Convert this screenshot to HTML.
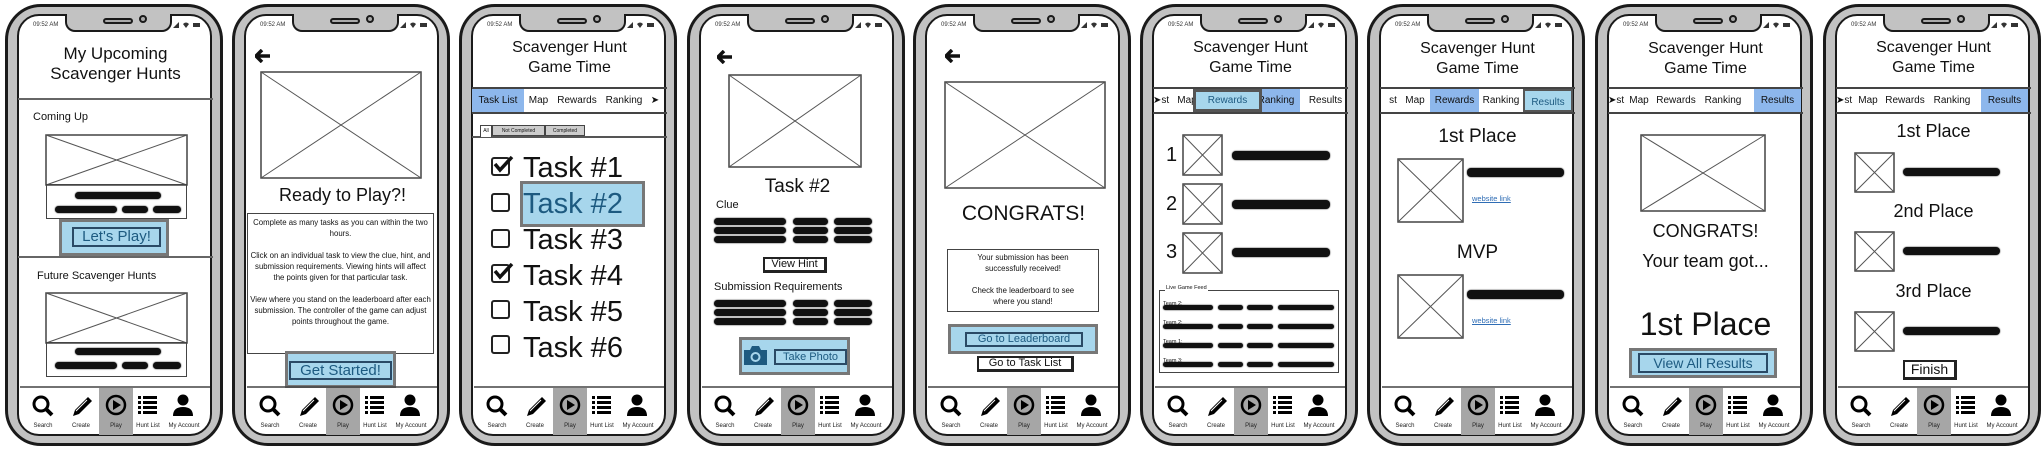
<!DOCTYPE html>
<html><head><meta charset="utf-8"><style>
*{box-sizing:border-box;margin:0;padding:0}
body{width:2044px;height:450px;background:#fff;position:relative;overflow:hidden;font-family:"Liberation Sans",sans-serif;color:#111}
.p{position:absolute;top:0;width:218px;height:450px}
.p>*{position:absolute}
.fo{left:0;top:4px;width:218px;height:442px;border:3px solid #1a1a1a;border-radius:36px;background:#c2c2c2}
.sc{left:12px;top:14px;width:195px;height:422px;border:2px solid #1a1a1a;border-radius:22px;background:#fff}
.no{left:60px;top:14px;width:107px;height:18px;background:#c2c2c2;border:2px solid #1a1a1a;border-top:none;border-radius:0 0 10px 10px}
.sp{left:98px;top:18px;width:30px;height:6px;border:2px solid #1a1a1a;border-radius:4px;background:#aaa}
.ca{left:134px;top:15px;width:8px;height:8px;border:2px solid #1a1a1a;border-radius:50%;background:#aaa}
.st{left:28px;top:22px;font-size:6px;color:#333}
.si{left:168px;top:21px;width:28px;height:8px}
.t{left:13px;width:195px;text-align:center}
.hr{left:13px;width:195px;height:2px;background:#666}
.s{height:7px;background:#111;border-radius:4px;box-shadow:0 0 1.5px #111}
.bx{border:1.5px solid #444}
.bt{background:#a7d6ec;border:3px solid #777}
.ib{border:2px solid #2a4a66;color:#1d5a80;text-align:center;background:#a7d6ec}
.wb{border:2px solid #222;border-right-width:3px;border-bottom-width:3px;text-align:center;background:#fff}
.tb{left:13px;top:87px;width:195px;height:27px;border-top:2px solid #444;border-bottom:2px solid #444;font-size:10px}
.tb span{position:absolute;top:0;height:23px;line-height:23px;text-align:center}
.hb{background:#8db7ec}
.nv{left:0;top:380px;width:218px;height:60px}
.ar{width:16px;height:14px}
svg.x{overflow:visible}
</style></head><body>

<!-- PHONE 1 -->
<div class="p" style="left:5px">
<div class="fo"></div><div class="sc"></div><div class="no"></div><div class="sp"></div><div class="ca"></div><div class="st">09:52 AM</div>
<svg class="si" viewBox="0 0 28 8"><path d="M0 7L6 1V7Z" fill="#333"/><path d="M10 3Q13 0 16 3L13 7Z" fill="#333"/><rect x="20" y="2" width="7" height="4" fill="#333"/></svg>
<div class="t" style="top:44px;font-size:17px;line-height:20px">My Upcoming<br>Scavenger Hunts</div>
<div class="hr" style="top:98px"></div>
<div style="left:28px;top:111px;font-size:11px">Coming Up</div>
<svg class="x" style="left:41px;top:135px;width:141px;height:50px" viewBox="0 0 100 100" preserveAspectRatio="none"><rect width="100" height="100" fill="none" stroke="#444" stroke-width="1.5" vector-effect="non-scaling-stroke"/><path d="M0 0L100 100M100 0L0 100" stroke="#555" vector-effect="non-scaling-stroke"/></svg>
<div class="bx" style="left:41px;top:184px;width:141px;height:35px"></div>
<div class="s" style="left:70px;top:192px;width:86px"></div>
<div class="s" style="left:50px;top:206px;width:62px"></div><div class="s" style="left:117px;top:206px;width:26px"></div><div class="s" style="left:148px;top:206px;width:28px"></div>
<div class="bt" style="left:54px;top:219px;width:110px;height:37px"></div>
<div class="ib" style="left:67px;top:227px;width:89px;height:20px;font-size:15px;line-height:16px">Let's Play!</div>
<div class="hr" style="top:256px"></div>
<div style="left:32px;top:270px;font-size:11px">Future Scavenger Hunts</div>
<svg class="x" style="left:41px;top:293px;width:141px;height:50px" viewBox="0 0 100 100" preserveAspectRatio="none"><rect width="100" height="100" fill="none" stroke="#444" stroke-width="1.5" vector-effect="non-scaling-stroke"/><path d="M0 0L100 100M100 0L0 100" stroke="#555" vector-effect="non-scaling-stroke"/></svg>
<div class="bx" style="left:41px;top:342px;width:141px;height:35px"></div>
<div class="s" style="left:70px;top:348px;width:86px"></div>
<div class="s" style="left:50px;top:362px;width:62px"></div><div class="s" style="left:117px;top:362px;width:26px"></div><div class="s" style="left:148px;top:362px;width:28px"></div>
<svg class="nv" viewBox="0 0 218 60"><line x1="15" y1="7" x2="205" y2="7" stroke="#444" stroke-width="1.5"/><rect x="94" y="8" width="34" height="47" fill="#a6a6a6"/><circle cx="36" cy="24" r="7" stroke="#000" stroke-width="3" fill="none"/><path d="M41 29L47 35" stroke="#000" stroke-width="4"/><path d="M68 36L70 30L83 17L87 21L74 34Z" fill="#000"/><path d="M71 31L82 20" stroke="#fff" stroke-width="1"/><circle cx="111" cy="25" r="9" stroke="#000" stroke-width="2.5" fill="none"/><path d="M108 20L116 25L108 30Z" fill="#000"/><g fill="#000"><rect x="133" y="16" width="3" height="3"/><rect x="138" y="16" width="14" height="3"/><rect x="133" y="21" width="3" height="3"/><rect x="138" y="21" width="14" height="3"/><rect x="133" y="26" width="3" height="3"/><rect x="138" y="26" width="14" height="3"/><rect x="133" y="31" width="3" height="3"/><rect x="138" y="31" width="14" height="3"/></g><circle cx="178" cy="20" r="5.5" fill="#000"/><path d="M168 36Q168 27 178 27Q188 27 188 36Z" fill="#000"/><g font-size="6" text-anchor="middle" fill="#222" font-family="Liberation Sans"><text x="38" y="47">Search</text><text x="76" y="47">Create</text><text x="111" y="47">Play</text><text x="143" y="47">Hunt List</text><text x="179" y="47">My Account</text></g></svg>
</div>

<!-- PHONE 2 -->
<div class="p" style="left:232px">
<div class="fo"></div><div class="sc"></div><div class="no"></div><div class="sp"></div><div class="ca"></div><div class="st">09:52 AM</div>
<svg class="si" viewBox="0 0 28 8"><path d="M0 7L6 1V7Z" fill="#333"/><path d="M10 3Q13 0 16 3L13 7Z" fill="#333"/><rect x="20" y="2" width="7" height="4" fill="#333"/></svg>
<svg class="ar" style="left:23px;top:49px" viewBox="0 0 16 14"><path d="M7 1L1 7L7 13M1 7H15" stroke="#111" stroke-width="3.5" fill="none" stroke-linejoin="round"/></svg>
<svg class="x" style="left:29px;top:72px;width:160px;height:106px" viewBox="0 0 100 100" preserveAspectRatio="none"><rect width="100" height="100" fill="none" stroke="#444" stroke-width="1.5" vector-effect="non-scaling-stroke"/><path d="M0 0L100 100M100 0L0 100" stroke="#555" vector-effect="non-scaling-stroke"/></svg>
<div class="t" style="top:185px;font-size:18px">Ready to Play?!</div>
<div class="bx" style="left:15px;top:213px;width:187px;height:141px;font-size:7.8px;line-height:11px;text-align:center;padding:3px 2px">Complete as many tasks as you can within the two hours.<br><br>Click on an individual task to view the clue, hint, and submission requirements. Viewing hints will affect the points given for that particular task.<br><br>View where you stand on the leaderboard after each submission. The controller of the game can adjust points throughout the game.</div>
<div class="bt" style="left:53px;top:351px;width:111px;height:37px"></div>
<div class="ib" style="left:57px;top:361px;width:103px;height:19px;font-size:15px;line-height:15px">Get Started!</div>
<svg class="nv" viewBox="0 0 218 60"><line x1="15" y1="7" x2="205" y2="7" stroke="#444" stroke-width="1.5"/><rect x="94" y="8" width="34" height="47" fill="#a6a6a6"/><circle cx="36" cy="24" r="7" stroke="#000" stroke-width="3" fill="none"/><path d="M41 29L47 35" stroke="#000" stroke-width="4"/><path d="M68 36L70 30L83 17L87 21L74 34Z" fill="#000"/><path d="M71 31L82 20" stroke="#fff" stroke-width="1"/><circle cx="111" cy="25" r="9" stroke="#000" stroke-width="2.5" fill="none"/><path d="M108 20L116 25L108 30Z" fill="#000"/><g fill="#000"><rect x="133" y="16" width="3" height="3"/><rect x="138" y="16" width="14" height="3"/><rect x="133" y="21" width="3" height="3"/><rect x="138" y="21" width="14" height="3"/><rect x="133" y="26" width="3" height="3"/><rect x="138" y="26" width="14" height="3"/><rect x="133" y="31" width="3" height="3"/><rect x="138" y="31" width="14" height="3"/></g><circle cx="178" cy="20" r="5.5" fill="#000"/><path d="M168 36Q168 27 178 27Q188 27 188 36Z" fill="#000"/><g font-size="6" text-anchor="middle" fill="#222" font-family="Liberation Sans"><text x="38" y="47">Search</text><text x="76" y="47">Create</text><text x="111" y="47">Play</text><text x="143" y="47">Hunt List</text><text x="179" y="47">My Account</text></g></svg>
</div>

<!-- PHONE 3 -->
<div class="p" style="left:459px">
<div class="fo"></div><div class="sc"></div><div class="no"></div><div class="sp"></div><div class="ca"></div><div class="st">09:52 AM</div>
<svg class="si" viewBox="0 0 28 8"><path d="M0 7L6 1V7Z" fill="#333"/><path d="M10 3Q13 0 16 3L13 7Z" fill="#333"/><rect x="20" y="2" width="7" height="4" fill="#333"/></svg>
<div class="t" style="top:38px;font-size:16px;line-height:20px">Scavenger Hunt<br>Game Time</div>
<div class="tb"><span class="hb" style="left:0;width:52px">Task List</span><span style="left:54px;width:25px">Map</span><span style="left:83px;width:44px">Rewards</span><span style="left:130px;width:44px">Ranking</span><span style="left:177px;width:12px">&#10148;</span></div>
<div style="left:13px;top:136px;width:195px;height:2px;background:#555"></div>
<div style="left:21px;top:125px;width:12px;height:12px;border:1px solid #444;border-bottom:none;font-size:5px;line-height:11px;text-align:center;background:#fff">All</div>
<div style="left:33px;top:125px;width:53px;height:11px;border:1px solid #444;font-size:5px;line-height:10px;text-align:center;background:#ccc">Not Completed</div>
<div style="left:86px;top:125px;width:40px;height:11px;border:1px solid #444;font-size:5px;line-height:10px;text-align:center;background:#ccc">Completed</div>
<div class="bt" style="left:61px;top:181px;width:125px;height:46px"></div>
<div style="left:64px;top:150px;font-size:29px;line-height:36px">Task #1<br><span style="position:static;color:#1d5a80">Task #2</span><br>Task #3<br>Task #4<br>Task #5<br>Task #6</div>
<div style="left:32px;top:157px;width:19px;height:19px;border:2px solid #222;border-radius:3px"></div>
<div style="left:32px;top:193px;width:19px;height:19px;border:2px solid #222;border-radius:3px"></div>
<div style="left:32px;top:229px;width:19px;height:19px;border:2px solid #222;border-radius:3px"></div>
<div style="left:32px;top:264px;width:19px;height:19px;border:2px solid #222;border-radius:3px"></div>
<div style="left:32px;top:300px;width:19px;height:19px;border:2px solid #222;border-radius:3px"></div>
<div style="left:32px;top:335px;width:19px;height:19px;border:2px solid #222;border-radius:3px"></div>
<svg style="left:33px;top:154px;width:22px;height:22px" viewBox="0 0 22 22"><path d="M3 10L8 16L20 3" stroke="#111" stroke-width="3.5" fill="none"/></svg>
<svg style="left:33px;top:261px;width:22px;height:22px" viewBox="0 0 22 22"><path d="M3 10L8 16L20 3" stroke="#111" stroke-width="3.5" fill="none"/></svg>
<svg class="nv" viewBox="0 0 218 60"><line x1="15" y1="7" x2="205" y2="7" stroke="#444" stroke-width="1.5"/><rect x="94" y="8" width="34" height="47" fill="#a6a6a6"/><circle cx="36" cy="24" r="7" stroke="#000" stroke-width="3" fill="none"/><path d="M41 29L47 35" stroke="#000" stroke-width="4"/><path d="M68 36L70 30L83 17L87 21L74 34Z" fill="#000"/><path d="M71 31L82 20" stroke="#fff" stroke-width="1"/><circle cx="111" cy="25" r="9" stroke="#000" stroke-width="2.5" fill="none"/><path d="M108 20L116 25L108 30Z" fill="#000"/><g fill="#000"><rect x="133" y="16" width="3" height="3"/><rect x="138" y="16" width="14" height="3"/><rect x="133" y="21" width="3" height="3"/><rect x="138" y="21" width="14" height="3"/><rect x="133" y="26" width="3" height="3"/><rect x="138" y="26" width="14" height="3"/><rect x="133" y="31" width="3" height="3"/><rect x="138" y="31" width="14" height="3"/></g><circle cx="178" cy="20" r="5.5" fill="#000"/><path d="M168 36Q168 27 178 27Q188 27 188 36Z" fill="#000"/><g font-size="6" text-anchor="middle" fill="#222" font-family="Liberation Sans"><text x="38" y="47">Search</text><text x="76" y="47">Create</text><text x="111" y="47">Play</text><text x="143" y="47">Hunt List</text><text x="179" y="47">My Account</text></g></svg>
</div>

<!-- PHONE 4 -->
<div class="p" style="left:687px">
<div class="fo"></div><div class="sc"></div><div class="no"></div><div class="sp"></div><div class="ca"></div><div class="st">09:52 AM</div>
<svg class="si" viewBox="0 0 28 8"><path d="M0 7L6 1V7Z" fill="#333"/><path d="M10 3Q13 0 16 3L13 7Z" fill="#333"/><rect x="20" y="2" width="7" height="4" fill="#333"/></svg>
<svg class="ar" style="left:30px;top:50px" viewBox="0 0 16 14"><path d="M7 1L1 7L7 13M1 7H15" stroke="#111" stroke-width="3.5" fill="none" stroke-linejoin="round"/></svg>
<svg class="x" style="left:42px;top:75px;width:132px;height:92px" viewBox="0 0 100 100" preserveAspectRatio="none"><rect width="100" height="100" fill="none" stroke="#444" stroke-width="1.5" vector-effect="non-scaling-stroke"/><path d="M0 0L100 100M100 0L0 100" stroke="#555" vector-effect="non-scaling-stroke"/></svg>
<div class="t" style="top:176px;font-size:19px">Task #2</div>
<div style="left:29px;top:199px;font-size:11px">Clue</div>
<div class="s" style="left:27px;top:218px;width:72px"></div><div class="s" style="left:106px;top:218px;width:35px"></div><div class="s" style="left:147px;top:218px;width:38px"></div>
<div class="s" style="left:27px;top:227px;width:72px"></div><div class="s" style="left:106px;top:227px;width:35px"></div><div class="s" style="left:147px;top:227px;width:38px"></div>
<div class="s" style="left:27px;top:236px;width:72px"></div><div class="s" style="left:106px;top:236px;width:35px"></div><div class="s" style="left:147px;top:236px;width:38px"></div>
<div class="wb" style="left:76px;top:257px;width:64px;height:16px;font-size:11px;line-height:11px">View Hint</div>
<div style="left:27px;top:281px;font-size:11px">Submission Requirements</div>
<div class="s" style="left:27px;top:300px;width:72px"></div><div class="s" style="left:106px;top:300px;width:35px"></div><div class="s" style="left:147px;top:300px;width:38px"></div>
<div class="s" style="left:27px;top:309px;width:72px"></div><div class="s" style="left:106px;top:309px;width:35px"></div><div class="s" style="left:147px;top:309px;width:38px"></div>
<div class="s" style="left:27px;top:318px;width:72px"></div><div class="s" style="left:106px;top:318px;width:35px"></div><div class="s" style="left:147px;top:318px;width:38px"></div>
<div class="bt" style="left:52px;top:337px;width:111px;height:38px"></div>
<svg style="left:56px;top:344px;width:25px;height:22px" viewBox="0 0 25 22"><path d="M1 6H7L9 2H16L18 6H24V21H1Z" fill="#1d5a80"/><circle cx="12.5" cy="13" r="5" fill="#a7d6ec"/><circle cx="12.5" cy="13" r="3" fill="#1d5a80"/></svg>
<div class="ib" style="left:87px;top:349px;width:73px;height:16px;font-size:11px;line-height:12px">Take Photo</div>
<svg class="nv" viewBox="0 0 218 60"><line x1="15" y1="7" x2="205" y2="7" stroke="#444" stroke-width="1.5"/><rect x="94" y="8" width="34" height="47" fill="#a6a6a6"/><circle cx="36" cy="24" r="7" stroke="#000" stroke-width="3" fill="none"/><path d="M41 29L47 35" stroke="#000" stroke-width="4"/><path d="M68 36L70 30L83 17L87 21L74 34Z" fill="#000"/><path d="M71 31L82 20" stroke="#fff" stroke-width="1"/><circle cx="111" cy="25" r="9" stroke="#000" stroke-width="2.5" fill="none"/><path d="M108 20L116 25L108 30Z" fill="#000"/><g fill="#000"><rect x="133" y="16" width="3" height="3"/><rect x="138" y="16" width="14" height="3"/><rect x="133" y="21" width="3" height="3"/><rect x="138" y="21" width="14" height="3"/><rect x="133" y="26" width="3" height="3"/><rect x="138" y="26" width="14" height="3"/><rect x="133" y="31" width="3" height="3"/><rect x="138" y="31" width="14" height="3"/></g><circle cx="178" cy="20" r="5.5" fill="#000"/><path d="M168 36Q168 27 178 27Q188 27 188 36Z" fill="#000"/><g font-size="6" text-anchor="middle" fill="#222" font-family="Liberation Sans"><text x="38" y="47">Search</text><text x="76" y="47">Create</text><text x="111" y="47">Play</text><text x="143" y="47">Hunt List</text><text x="179" y="47">My Account</text></g></svg>
</div>

<!-- PHONE 5 -->
<div class="p" style="left:913px">
<div class="fo"></div><div class="sc"></div><div class="no"></div><div class="sp"></div><div class="ca"></div><div class="st">09:52 AM</div>
<svg class="si" viewBox="0 0 28 8"><path d="M0 7L6 1V7Z" fill="#333"/><path d="M10 3Q13 0 16 3L13 7Z" fill="#333"/><rect x="20" y="2" width="7" height="4" fill="#333"/></svg>
<svg class="ar" style="left:32px;top:49px" viewBox="0 0 16 14"><path d="M7 1L1 7L7 13M1 7H15" stroke="#111" stroke-width="3.5" fill="none" stroke-linejoin="round"/></svg>
<svg class="x" style="left:32px;top:82px;width:160px;height:106px" viewBox="0 0 100 100" preserveAspectRatio="none"><rect width="100" height="100" fill="none" stroke="#444" stroke-width="1.5" vector-effect="non-scaling-stroke"/><path d="M0 0L100 100M100 0L0 100" stroke="#555" vector-effect="non-scaling-stroke"/></svg>
<div class="t" style="top:202px;font-size:21px">CONGRATS!</div>
<div class="bx" style="left:34px;top:249px;width:152px;height:63px;font-size:7.8px;line-height:11px;text-align:center;padding-top:2px">Your submission has been<br>successfully received!<br><br>Check the leaderboard to see<br>where you stand!</div>
<div class="bt" style="left:35px;top:324px;width:150px;height:30px"></div>
<div class="ib" style="left:52px;top:332px;width:118px;height:15px;font-size:11px;line-height:11px">Go to Leaderboard</div>
<div class="wb" style="left:64px;top:356px;width:97px;height:16px;font-size:11px;line-height:11px">Go to Task List</div>
<svg class="nv" viewBox="0 0 218 60"><line x1="15" y1="7" x2="205" y2="7" stroke="#444" stroke-width="1.5"/><rect x="94" y="8" width="34" height="47" fill="#a6a6a6"/><circle cx="36" cy="24" r="7" stroke="#000" stroke-width="3" fill="none"/><path d="M41 29L47 35" stroke="#000" stroke-width="4"/><path d="M68 36L70 30L83 17L87 21L74 34Z" fill="#000"/><path d="M71 31L82 20" stroke="#fff" stroke-width="1"/><circle cx="111" cy="25" r="9" stroke="#000" stroke-width="2.5" fill="none"/><path d="M108 20L116 25L108 30Z" fill="#000"/><g fill="#000"><rect x="133" y="16" width="3" height="3"/><rect x="138" y="16" width="14" height="3"/><rect x="133" y="21" width="3" height="3"/><rect x="138" y="21" width="14" height="3"/><rect x="133" y="26" width="3" height="3"/><rect x="138" y="26" width="14" height="3"/><rect x="133" y="31" width="3" height="3"/><rect x="138" y="31" width="14" height="3"/></g><circle cx="178" cy="20" r="5.5" fill="#000"/><path d="M168 36Q168 27 178 27Q188 27 188 36Z" fill="#000"/><g font-size="6" text-anchor="middle" fill="#222" font-family="Liberation Sans"><text x="38" y="47">Search</text><text x="76" y="47">Create</text><text x="111" y="47">Play</text><text x="143" y="47">Hunt List</text><text x="179" y="47">My Account</text></g></svg>
</div>

<!-- PHONE 6 -->
<div class="p" style="left:1140px">
<div class="fo"></div><div class="sc"></div><div class="no"></div><div class="sp"></div><div class="ca"></div><div class="st">09:52 AM</div>
<svg class="si" viewBox="0 0 28 8"><path d="M0 7L6 1V7Z" fill="#333"/><path d="M10 3Q13 0 16 3L13 7Z" fill="#333"/><rect x="20" y="2" width="7" height="4" fill="#333"/></svg>
<div class="t" style="top:38px;font-size:16px;line-height:20px">Scavenger Hunt<br>Game Time</div>
<div class="tb"><span style="left:0;width:16px">&#10148;st</span><span style="left:23px;width:22px">Map</span><span class="hb" style="left:99px;width:48px">Ranking</span><span style="left:40px;width:69px;background:#a7d6ec;border:3px solid #555;line-height:17px;color:#1d5a80">Rewards</span><span style="left:150px;width:45px">Results</span></div>
<div style="left:26px;top:144px;font-size:20px">1</div>
<div style="left:26px;top:193px;font-size:20px">2</div>
<div style="left:26px;top:241px;font-size:20px">3</div>
<svg class="x" style="left:43px;top:135px;width:39px;height:40px" viewBox="0 0 100 100" preserveAspectRatio="none"><rect width="100" height="100" fill="none" stroke="#444" stroke-width="1.5" vector-effect="non-scaling-stroke"/><path d="M0 0L100 100M100 0L0 100" stroke="#555" vector-effect="non-scaling-stroke"/></svg>
<svg class="x" style="left:43px;top:184px;width:39px;height:40px" viewBox="0 0 100 100" preserveAspectRatio="none"><rect width="100" height="100" fill="none" stroke="#444" stroke-width="1.5" vector-effect="non-scaling-stroke"/><path d="M0 0L100 100M100 0L0 100" stroke="#555" vector-effect="non-scaling-stroke"/></svg>
<svg class="x" style="left:43px;top:233px;width:39px;height:40px" viewBox="0 0 100 100" preserveAspectRatio="none"><rect width="100" height="100" fill="none" stroke="#444" stroke-width="1.5" vector-effect="non-scaling-stroke"/><path d="M0 0L100 100M100 0L0 100" stroke="#555" vector-effect="non-scaling-stroke"/></svg>
<div class="s" style="left:92px;top:151px;width:98px;height:9px"></div>
<div class="s" style="left:92px;top:200px;width:98px;height:9px"></div>
<div class="s" style="left:92px;top:248px;width:98px;height:9px"></div>
<div class="bx" style="left:19px;top:290px;width:180px;height:83px"></div>
<div style="left:25px;top:285px;font-size:5.5px;background:#fff;padding:0 1px">Live Game Feed</div>
<div style="left:23px;top:295px;font-size:5.5px;line-height:19px">Team 2:<br>Team 2:<br>Team 1:<br>Team 3:</div>
<div class="s" style="left:23px;top:305px;width:50px;height:5px"></div><div class="s" style="left:78px;top:305px;width:25px;height:5px"></div><div class="s" style="left:107px;top:305px;width:26px;height:5px"></div><div class="s" style="left:138px;top:305px;width:56px;height:5px"></div>
<div class="s" style="left:23px;top:324px;width:50px;height:5px"></div><div class="s" style="left:78px;top:324px;width:25px;height:5px"></div><div class="s" style="left:107px;top:324px;width:26px;height:5px"></div><div class="s" style="left:138px;top:324px;width:56px;height:5px"></div>
<div class="s" style="left:23px;top:343px;width:50px;height:5px"></div><div class="s" style="left:78px;top:343px;width:25px;height:5px"></div><div class="s" style="left:107px;top:343px;width:26px;height:5px"></div><div class="s" style="left:138px;top:343px;width:56px;height:5px"></div>
<div class="s" style="left:23px;top:362px;width:50px;height:5px"></div><div class="s" style="left:78px;top:362px;width:25px;height:5px"></div><div class="s" style="left:107px;top:362px;width:26px;height:5px"></div><div class="s" style="left:138px;top:362px;width:56px;height:5px"></div>
<svg class="nv" viewBox="0 0 218 60"><line x1="15" y1="7" x2="205" y2="7" stroke="#444" stroke-width="1.5"/><rect x="94" y="8" width="34" height="47" fill="#a6a6a6"/><circle cx="36" cy="24" r="7" stroke="#000" stroke-width="3" fill="none"/><path d="M41 29L47 35" stroke="#000" stroke-width="4"/><path d="M68 36L70 30L83 17L87 21L74 34Z" fill="#000"/><path d="M71 31L82 20" stroke="#fff" stroke-width="1"/><circle cx="111" cy="25" r="9" stroke="#000" stroke-width="2.5" fill="none"/><path d="M108 20L116 25L108 30Z" fill="#000"/><g fill="#000"><rect x="133" y="16" width="3" height="3"/><rect x="138" y="16" width="14" height="3"/><rect x="133" y="21" width="3" height="3"/><rect x="138" y="21" width="14" height="3"/><rect x="133" y="26" width="3" height="3"/><rect x="138" y="26" width="14" height="3"/><rect x="133" y="31" width="3" height="3"/><rect x="138" y="31" width="14" height="3"/></g><circle cx="178" cy="20" r="5.5" fill="#000"/><path d="M168 36Q168 27 178 27Q188 27 188 36Z" fill="#000"/><g font-size="6" text-anchor="middle" fill="#222" font-family="Liberation Sans"><text x="38" y="47">Search</text><text x="76" y="47">Create</text><text x="111" y="47">Play</text><text x="143" y="47">Hunt List</text><text x="179" y="47">My Account</text></g></svg>
</div>

<!-- PHONE 7 -->
<div class="p" style="left:1367px">
<div class="fo"></div><div class="sc"></div><div class="no"></div><div class="sp"></div><div class="ca"></div><div class="st">09:52 AM</div>
<svg class="si" viewBox="0 0 28 8"><path d="M0 7L6 1V7Z" fill="#333"/><path d="M10 3Q13 0 16 3L13 7Z" fill="#333"/><rect x="20" y="2" width="7" height="4" fill="#333"/></svg>
<div class="t" style="top:39px;font-size:16px;line-height:20px">Scavenger Hunt<br>Game Time</div>
<div class="tb"><span style="left:6px;width:14px">st</span><span style="left:24px;width:22px">Map</span><span class="hb" style="left:50px;width:49px">Rewards</span><span style="left:99px;width:44px">Ranking</span><span style="left:143px;width:50px;background:#a7d6ec;border:2px solid #555;color:#1d5a80">Results</span></div>
<div class="t" style="top:126px;font-size:19px">1st Place</div>
<svg class="x" style="left:31px;top:159px;width:65px;height:63px" viewBox="0 0 100 100" preserveAspectRatio="none"><rect width="100" height="100" fill="none" stroke="#444" stroke-width="1.5" vector-effect="non-scaling-stroke"/><path d="M0 0L100 100M100 0L0 100" stroke="#555" vector-effect="non-scaling-stroke"/></svg>
<div class="s" style="left:100px;top:168px;width:97px;height:9px"></div>
<div style="left:105px;top:194px;font-size:7.5px;color:#2f6db5;text-decoration:underline">website link</div>
<div class="t" style="top:242px;font-size:19px">MVP</div>
<svg class="x" style="left:31px;top:275px;width:65px;height:63px" viewBox="0 0 100 100" preserveAspectRatio="none"><rect width="100" height="100" fill="none" stroke="#444" stroke-width="1.5" vector-effect="non-scaling-stroke"/><path d="M0 0L100 100M100 0L0 100" stroke="#555" vector-effect="non-scaling-stroke"/></svg>
<div class="s" style="left:100px;top:290px;width:97px;height:9px"></div>
<div style="left:105px;top:316px;font-size:7.5px;color:#2f6db5;text-decoration:underline">website link</div>
<svg class="nv" viewBox="0 0 218 60"><line x1="15" y1="7" x2="205" y2="7" stroke="#444" stroke-width="1.5"/><rect x="94" y="8" width="34" height="47" fill="#a6a6a6"/><circle cx="36" cy="24" r="7" stroke="#000" stroke-width="3" fill="none"/><path d="M41 29L47 35" stroke="#000" stroke-width="4"/><path d="M68 36L70 30L83 17L87 21L74 34Z" fill="#000"/><path d="M71 31L82 20" stroke="#fff" stroke-width="1"/><circle cx="111" cy="25" r="9" stroke="#000" stroke-width="2.5" fill="none"/><path d="M108 20L116 25L108 30Z" fill="#000"/><g fill="#000"><rect x="133" y="16" width="3" height="3"/><rect x="138" y="16" width="14" height="3"/><rect x="133" y="21" width="3" height="3"/><rect x="138" y="21" width="14" height="3"/><rect x="133" y="26" width="3" height="3"/><rect x="138" y="26" width="14" height="3"/><rect x="133" y="31" width="3" height="3"/><rect x="138" y="31" width="14" height="3"/></g><circle cx="178" cy="20" r="5.5" fill="#000"/><path d="M168 36Q168 27 178 27Q188 27 188 36Z" fill="#000"/><g font-size="6" text-anchor="middle" fill="#222" font-family="Liberation Sans"><text x="38" y="47">Search</text><text x="76" y="47">Create</text><text x="111" y="47">Play</text><text x="143" y="47">Hunt List</text><text x="179" y="47">My Account</text></g></svg>
</div>

<!-- PHONE 8 -->
<div class="p" style="left:1595px">
<div class="fo"></div><div class="sc"></div><div class="no"></div><div class="sp"></div><div class="ca"></div><div class="st">09:52 AM</div>
<svg class="si" viewBox="0 0 28 8"><path d="M0 7L6 1V7Z" fill="#333"/><path d="M10 3Q13 0 16 3L13 7Z" fill="#333"/><rect x="20" y="2" width="7" height="4" fill="#333"/></svg>
<div class="t" style="top:39px;font-size:16px;line-height:20px">Scavenger Hunt<br>Game Time</div>
<div class="tb"><span style="left:0;width:16px">&#10148;st</span><span style="left:20px;width:22px">Map</span><span style="left:46px;width:44px">Rewards</span><span style="left:93px;width:44px">Ranking</span><span class="hb" style="left:146px;width:47px">Results</span></div>
<svg class="x" style="left:46px;top:135px;width:124px;height:76px" viewBox="0 0 100 100" preserveAspectRatio="none"><rect width="100" height="100" fill="none" stroke="#444" stroke-width="1.5" vector-effect="non-scaling-stroke"/><path d="M0 0L100 100M100 0L0 100" stroke="#555" vector-effect="non-scaling-stroke"/></svg>
<div class="t" style="top:221px;font-size:18px">CONGRATS!</div>
<div class="t" style="top:251px;font-size:18px">Your team got...</div>
<div class="t" style="top:306px;font-size:32px">1st Place</div>
<div class="bt" style="left:34px;top:348px;width:148px;height:30px"></div>
<div class="ib" style="left:43px;top:353px;width:130px;height:20px;font-size:14px;line-height:16px">View All Results</div>
<svg class="nv" viewBox="0 0 218 60"><line x1="15" y1="7" x2="205" y2="7" stroke="#444" stroke-width="1.5"/><rect x="94" y="8" width="34" height="47" fill="#a6a6a6"/><circle cx="36" cy="24" r="7" stroke="#000" stroke-width="3" fill="none"/><path d="M41 29L47 35" stroke="#000" stroke-width="4"/><path d="M68 36L70 30L83 17L87 21L74 34Z" fill="#000"/><path d="M71 31L82 20" stroke="#fff" stroke-width="1"/><circle cx="111" cy="25" r="9" stroke="#000" stroke-width="2.5" fill="none"/><path d="M108 20L116 25L108 30Z" fill="#000"/><g fill="#000"><rect x="133" y="16" width="3" height="3"/><rect x="138" y="16" width="14" height="3"/><rect x="133" y="21" width="3" height="3"/><rect x="138" y="21" width="14" height="3"/><rect x="133" y="26" width="3" height="3"/><rect x="138" y="26" width="14" height="3"/><rect x="133" y="31" width="3" height="3"/><rect x="138" y="31" width="14" height="3"/></g><circle cx="178" cy="20" r="5.5" fill="#000"/><path d="M168 36Q168 27 178 27Q188 27 188 36Z" fill="#000"/><g font-size="6" text-anchor="middle" fill="#222" font-family="Liberation Sans"><text x="38" y="47">Search</text><text x="76" y="47">Create</text><text x="111" y="47">Play</text><text x="143" y="47">Hunt List</text><text x="179" y="47">My Account</text></g></svg>
</div>

<!-- PHONE 9 -->
<div class="p" style="left:1823px">
<div class="fo"></div><div class="sc"></div><div class="no"></div><div class="sp"></div><div class="ca"></div><div class="st">09:52 AM</div>
<svg class="si" viewBox="0 0 28 8"><path d="M0 7L6 1V7Z" fill="#333"/><path d="M10 3Q13 0 16 3L13 7Z" fill="#333"/><rect x="20" y="2" width="7" height="4" fill="#333"/></svg>
<div class="t" style="top:38px;font-size:16px;line-height:20px">Scavenger Hunt<br>Game Time</div>
<div class="tb"><span style="left:0;width:16px">&#10148;st</span><span style="left:21px;width:22px">Map</span><span style="left:47px;width:44px">Rewards</span><span style="left:94px;width:44px">Ranking</span><span class="hb" style="left:145px;width:47px">Results</span></div>
<div class="t" style="top:121px;font-size:18px">1st Place</div>
<svg class="x" style="left:32px;top:153px;width:39px;height:39px" viewBox="0 0 100 100" preserveAspectRatio="none"><rect width="100" height="100" fill="none" stroke="#444" stroke-width="1.5" vector-effect="non-scaling-stroke"/><path d="M0 0L100 100M100 0L0 100" stroke="#555" vector-effect="non-scaling-stroke"/></svg>
<div class="s" style="left:80px;top:168px;width:97px;height:8px"></div>
<div class="t" style="top:201px;font-size:18px">2nd Place</div>
<svg class="x" style="left:32px;top:232px;width:39px;height:39px" viewBox="0 0 100 100" preserveAspectRatio="none"><rect width="100" height="100" fill="none" stroke="#444" stroke-width="1.5" vector-effect="non-scaling-stroke"/><path d="M0 0L100 100M100 0L0 100" stroke="#555" vector-effect="non-scaling-stroke"/></svg>
<div class="s" style="left:80px;top:247px;width:97px;height:8px"></div>
<div class="t" style="top:281px;font-size:18px">3rd Place</div>
<svg class="x" style="left:32px;top:312px;width:39px;height:39px" viewBox="0 0 100 100" preserveAspectRatio="none"><rect width="100" height="100" fill="none" stroke="#444" stroke-width="1.5" vector-effect="non-scaling-stroke"/><path d="M0 0L100 100M100 0L0 100" stroke="#555" vector-effect="non-scaling-stroke"/></svg>
<div class="s" style="left:80px;top:327px;width:97px;height:8px"></div>
<div class="wb" style="left:80px;top:360px;width:54px;height:20px;font-size:14px;line-height:15px">Finish</div>
<svg class="nv" viewBox="0 0 218 60"><line x1="15" y1="7" x2="205" y2="7" stroke="#444" stroke-width="1.5"/><rect x="94" y="8" width="34" height="47" fill="#a6a6a6"/><circle cx="36" cy="24" r="7" stroke="#000" stroke-width="3" fill="none"/><path d="M41 29L47 35" stroke="#000" stroke-width="4"/><path d="M68 36L70 30L83 17L87 21L74 34Z" fill="#000"/><path d="M71 31L82 20" stroke="#fff" stroke-width="1"/><circle cx="111" cy="25" r="9" stroke="#000" stroke-width="2.5" fill="none"/><path d="M108 20L116 25L108 30Z" fill="#000"/><g fill="#000"><rect x="133" y="16" width="3" height="3"/><rect x="138" y="16" width="14" height="3"/><rect x="133" y="21" width="3" height="3"/><rect x="138" y="21" width="14" height="3"/><rect x="133" y="26" width="3" height="3"/><rect x="138" y="26" width="14" height="3"/><rect x="133" y="31" width="3" height="3"/><rect x="138" y="31" width="14" height="3"/></g><circle cx="178" cy="20" r="5.5" fill="#000"/><path d="M168 36Q168 27 178 27Q188 27 188 36Z" fill="#000"/><g font-size="6" text-anchor="middle" fill="#222" font-family="Liberation Sans"><text x="38" y="47">Search</text><text x="76" y="47">Create</text><text x="111" y="47">Play</text><text x="143" y="47">Hunt List</text><text x="179" y="47">My Account</text></g></svg>
</div>

</body></html>
